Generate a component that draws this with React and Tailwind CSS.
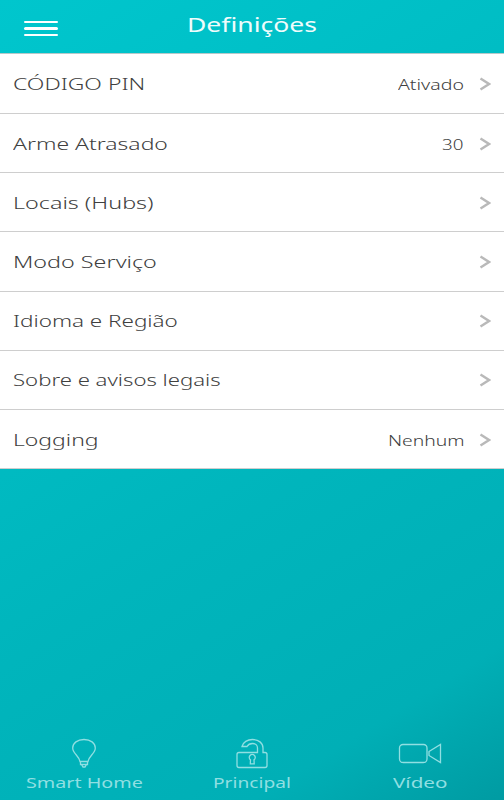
import { useLayoutEffect, useRef, useState } from "react";

// Stretches a line of text horizontally to a given width.
function WideText({ children, width, className = "" }) {
  const ref = useRef(null);
  const [scale, setScale] = useState(1);
  useLayoutEffect(() => {
    const fit = () => ref.current && setScale(width / ref.current.offsetWidth);
    fit();
    document.fonts.ready.then(fit);
  }, [width, children]);
  return (
    <span className={`block whitespace-nowrap ${className}`} style={{ width }}>
      <span ref={ref} className="inline-block origin-left" style={{ transform: `scaleX(${scale})` }}>
        {children}
      </span>
    </span>
  );
}

const rows = [
  { label: "CÓDIGO PIN", width: 132, value: "Ativado", valueWidth: 66 },
  { label: "Arme Atrasado", width: 155, value: "30", valueWidth: 22 },
  { label: "Locais (Hubs)", width: 140 },
  { label: "Modo Serviço", width: 144 },
  { label: "Idioma e Região", width: 165 },
  { label: "Sobre e avisos legais", width: 207 },
  { label: "Logging", width: 85, value: "Nenhum", valueWidth: 76 },
];

function Chevron() {
  return (
    <svg width="12" height="14" viewBox="0 0 12 14" fill="none" stroke="#b9b9b9" strokeWidth="2.4">
      <path d="M1.500 1.500 10 7 1.500 12.500" />
    </svg>
  );
}

function Bulb() {
  return (
    <svg width="26" height="32" viewBox="0 0 26 32" fill="none" stroke="currentColor" strokeWidth="1.3">
      <path d="M9 23.500H17C17.700 18 24.300 15.500 24.300 10 24.300 5 19.500 1.500 13 1.500S1.700 5 1.700 10C1.700 15.500 8.300 18 9 23.500Z" />
      <path d="M9.500 23.500v3h7v-3M10.500 26.500 12 29h2l1.500-2.500" />
    </svg>
  );
}

function Lock() {
  return (
    <svg width="32" height="32" viewBox="0 0 32 32" fill="none" stroke="currentColor" strokeWidth="1.300">
      <path d="M21.500 14.500H3a2 2 0 0 0-2 2v11a2 2 0 0 0 2 2h26a2 2 0 0 0 2-2v-11a2 2 0 0 0-2-2h-2V10C27 5 22.500 1.500 16.500 1.500 11.500 1.500 7 4.200 6 8.500h5C12 6.700 14 5.500 16.500 5.500c3 0 5 2 5 4.500Z" />
      <path d="M14.500 21.900a3 3 0 1 1 3.500 0l.2 3.900h-3.900Z" />
    </svg>
  );
}

function Camera() {
  return (
    <svg width="44" height="22" viewBox="0 0 44 22" fill="none" stroke="currentColor" strokeWidth="1.300">
      <rect x="1.500" y="1.500" width="27.500" height="18" rx="3.500" />
      <path d="M31 8.500 42.500 1.500v18L31 12.500Z" />
    </svg>
  );
}

const tabs = [
  { label: "Smart Home", width: 117, Icon: Bulb },
  { label: "Principal", width: 78, Icon: Lock },
  { label: "Vídeo", width: 54, Icon: Camera },
];

export default function App() {
  return (
    <div className="flex h-[800px] w-[504px] flex-col overflow-hidden bg-[linear-gradient(148deg,#00c6cd_0%,#00c0c7_22%,#00b5bc_60%,#00afb6_86%,#009ba2_100%)] font-['Noto_Sans',sans-serif] [font-variant-ligatures:none]">
      <header className="grid h-[53px] grid-cols-[1fr_auto_1fr] items-start">
        <div className="ml-[23.500px] flex w-[34px] flex-col gap-1 pt-[21px]">
          <span className="h-[2.300px] rounded-full bg-white" />
          <span className="h-[2.300px] rounded-full bg-white" />
          <span className="h-[2.300px] rounded-full bg-white" />
        </div>
        <h1 className="pt-[11px] text-[20px] leading-[28px] text-[#effcfc]">
          <WideText width={130}>Definições</WideText>
        </h1>
      </header>
      <main className="border-t border-[#b5c9ca]">
        {rows.map((r) => (
          <div key={r.label} className="flex h-[59.200px] items-center border-b border-[#cecece] bg-white pl-[13px] pr-[13px] pt-[1px] font-light text-[#404040] first:h-[60px]">
            <WideText width={r.width} className="text-[17px] leading-6">{r.label}</WideText>
            <div className="ml-auto flex items-center gap-[15px]">
              {r.value && <WideText width={r.valueWidth} className="text-[14.500px] leading-5">{r.value}</WideText>}
              <Chevron />
            </div>
          </div>
        ))}
      </main>
      <footer className="mt-auto grid h-[64px] grid-cols-3 text-[#90dfe2]">
        {tabs.map(({ label, width, Icon }) => (
          <div key={label} className="flex flex-col items-center">
            <div className="flex h-[35px] items-center"><Icon /></div>
            <WideText width={width} className="text-[14.500px] leading-[22px]">{label}</WideText>
          </div>
        ))}
      </footer>
    </div>
  );
}
